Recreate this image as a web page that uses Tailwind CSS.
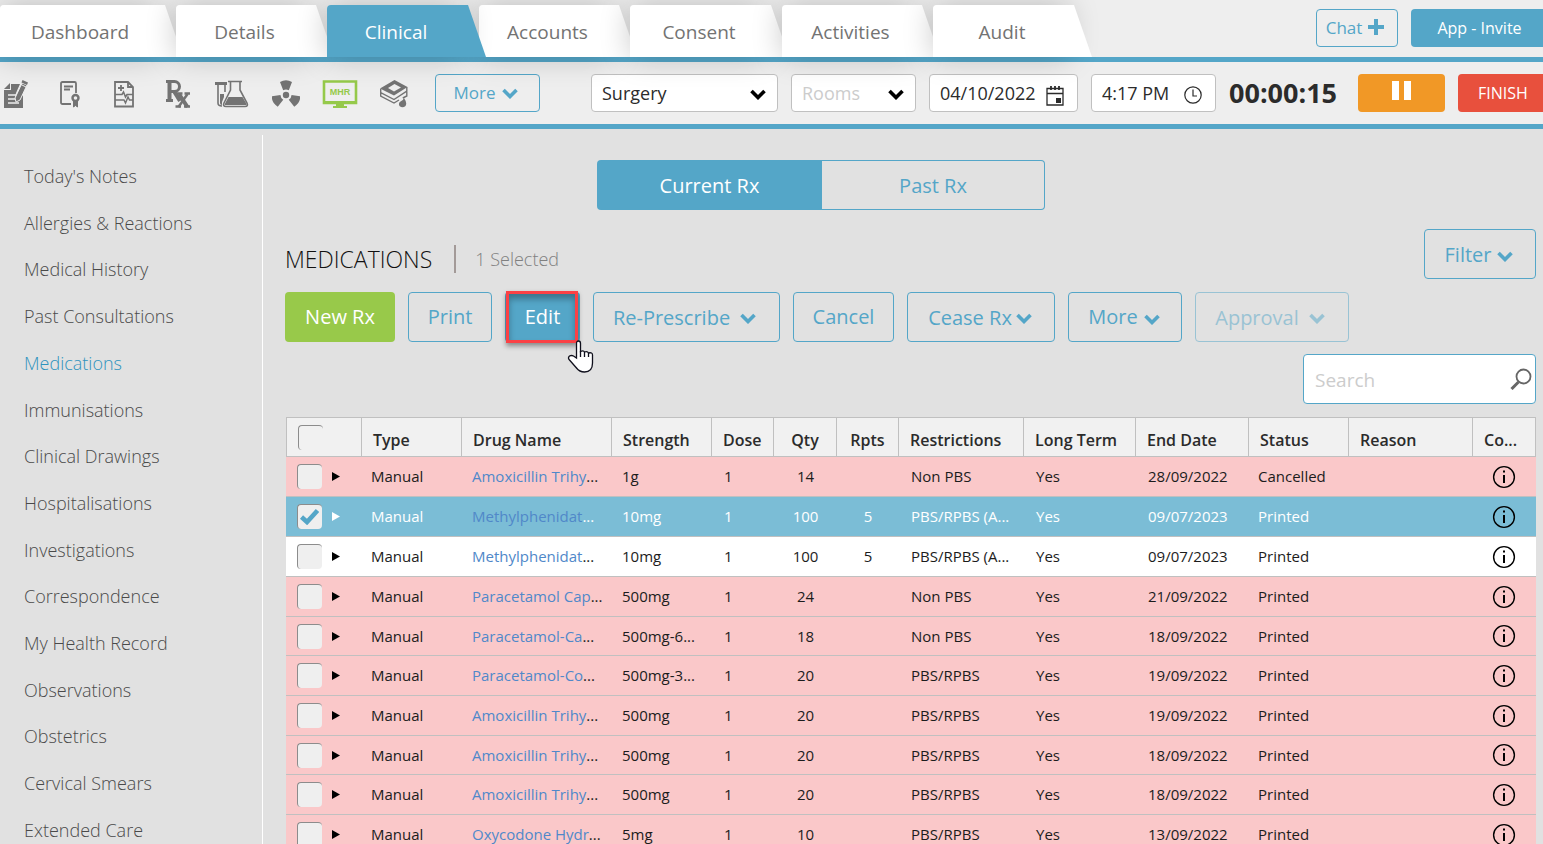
<!DOCTYPE html>
<html lang="en">
<head>
<meta charset="utf-8">
<title>Clinical - Medications</title>
<script src="https://cdn.jsdelivr.net/npm/@tailwindcss/browser@4"></script>
</head>
<body class="h-screen overflow-hidden bg-[#e1e1e1] font-['Open_Sans',sans-serif] text-[#737373]">
<svg class="hidden" aria-hidden="true">
  <symbol id="chev" viewBox="0 0 16 11"><path d="M1.5 2 8 8.5 14.500 2" fill="none" stroke="currentColor" stroke-width="3.600"/></symbol>
  <symbol id="info" viewBox="0 0 24 24"><circle cx="12" cy="12" r="10.400" fill="none" stroke="#000" stroke-width="1.400"/><path d="M11 5.500h2v2h-2zM11 10h2v8h-2z" fill="#000"/></symbol>
</svg>
<div class="flex h-full flex-col">
  <header class="relative z-10 flex shrink-0 items-end justify-between border-b-[5px] border-[#54a6c8] bg-[#eee] pt-[5px]">
    <nav id="tabs" class="flex text-[19px]" aria-label="Patient record"></nav>
    <div class="-mr-[5px] flex gap-[13px] self-start pt-1">
      <button class="flex h-[38px] w-[82px] items-center justify-center gap-[6px] rounded border border-[#54a6c8] pr-1 text-[17px] text-[#54a6c8]">Chat
        <svg class="mb-[2px] size-4" viewBox="0 0 16 16" fill="currentColor"><path d="M6 0h4v6h6v4h-6v6H6v-6H0V6h6z"/></svg></button>
      <button class="h-[38px] w-[137px] rounded bg-[#54a6c8] text-base text-white">App - Invite</button>
    </div>
  </header>
  <div class="flex shrink-0 items-center border-b-[5px] border-[#54a6c8] bg-[#eee] py-3">
    <div class="flex gap-[22px] pt-[2px]">
      <button class="flex w-8 justify-center" aria-label="Notes">
        <svg class="h-7 w-6 shrink-0" viewBox="0 0 24 28" fill="#737373"><path d="M7 4h9l-4 9-1 4 3 1 4-2 1-1v13H0V10h7z"/><path d="M6 3v6H0z"/><path d="M4 15h8M4 19h9M4 23h11" stroke="#eee" stroke-width="1.500"/><path d="m18 3 5 2-7 15-4 2-1-4z" stroke="#eee" stroke-width="1"/><path d="m18.500 0 5.500 2.500-1 2.500-5.500-2.500z"/><path d="m17 4.500 5 2.500" stroke="#eee" stroke-width="1"/></svg></button>
      <button class="flex w-8 justify-center" aria-label="Certificate">
        <svg class="h-7 w-5 shrink-0" viewBox="0 0 20 28" fill="none" stroke="#737373" stroke-width="1.800"><path d="M11 24H2.500Q1 24 1 22.500v-19Q1 2 2.500 2h12Q16 2 16 3.500V13"/><path d="M4 6.500h9M4 9.500h6"/><circle cx="15.500" cy="18" r="3" stroke-width="2.400"/><path d="M13.500 21v6l2-1.500 2 1.500v-6" fill="#737373" stroke-width="1"/></svg></button>
      <button class="flex w-8 justify-center" aria-label="Health summary">
        <svg class="h-7 w-5 shrink-0" viewBox="0 0 20 28" fill="none" stroke="#737373" stroke-width="1.800"><path d="M1 2h13l5 5v19.500H1z"/><path d="M14 2v5h5" /><path d="M4 8h6M7 5v6"/><path d="M1 14.500h7l1.500-2.500 2 5 1.500-2.500h6M1 20h9l1.500 3 2.500-6 1.500 3H19" stroke-width="1.500"/></svg></button>
      <button class="flex w-8 justify-center" aria-label="Prescriptions">
        <svg class="h-7 w-6 shrink-0" viewBox="0 0 24 28" fill="none" stroke="#737373"><path d="M3.500 1v20" stroke-width="4"/><path d="M0 1.500h8.500a4.500 4.500 0 0 1 0 10H4M0 20.500h7" stroke-width="3"/><path d="m8.500 12 5.500 9" stroke-width="4"/><path d="m13 14 8.500 13" stroke-width="4"/><path d="m21.500 14-9 13" stroke-width="2.500"/><path d="M11 13.500h5.500M18.500 13.500H24M9.500 26.500H15M18 26.500h6" stroke-width="2.500"/></svg></button>
      <button class="flex w-8 justify-center" aria-label="Pathology">
        <svg class="h-7 w-[34px] shrink-0" viewBox="0 0 34 28" fill="none" stroke="#737373" stroke-width="1.600"><path d="M0 3.500h12" stroke-width="3"/><path d="M3 4v19q0 3 4 3M10 4v8"/><path d="M5 14h4v3l-2 5v3q-2 0-2-2z" fill="#737373" stroke="none"/><path d="M13 1.500h14M15.500 2v8L9 23q-1.500 3.500 2 3.500h19q3.500 0 2-3.500L25 10V2"/><path d="M13.500 17h14l3.800 6.500q1 1.500-1 1.500H11q-2 0-1-1.500z" fill="#737373" stroke="none"/></svg></button>
      <button class="flex w-8 justify-center" aria-label="Radiology">
        <svg class="h-7 w-7 shrink-0" viewBox="0 0 28 28" fill="#737373"><circle cx="14" cy="15" r="3.200"/><g id="blade"><path d="M8 2q6-3.500 12 0l-3.200 8.200q-2.800-1.400-5.600 0z"/></g><use href="#blade" transform="rotate(120 14 15)"/><use href="#blade" transform="rotate(240 14 15)"/></svg></button>
      <button class="flex w-8 justify-center" aria-label="My Health Record">
        <svg class="h-7 w-9 shrink-0" viewBox="0 0 36 28"><path d="M2 1.500h32v21.500H2z" fill="none" stroke="#95c94a" stroke-width="2.600"/><path d="M1 21h34v3H1zM14 24h8v2h3v2H11v-2h3z" fill="#95c94a"/><text x="18" y="15" text-anchor="middle" font-size="9" font-weight="700" fill="#95c94a" font-family="Liberation Sans">MHR</text></svg></button>
      <button class="flex w-8 justify-center" aria-label="Specimens">
        <svg class="h-7 w-7 shrink-0" viewBox="0 0 28 28"><path fill-rule="evenodd" fill="#737373" d="M14.500 0 27.500 7 14 15.500 0 8.500zM14.500 4 8 8l6 3.500L21 7.500z"/><path d="M.7 9v3.500L14 19.500 26.800 11V7M.7 12.500v3.500L14 23l5-3M26.800 11v5l-4 2" fill="none" stroke="#737373" stroke-width="1.400"/><path d="M24 18q3.500 5 1.500 8-3 2.500-6 0-1.500-3 1-4.500Q23 21 24 18z" fill="#737373"/></svg></button>
    </div>
    <button class="ml-[25px] flex h-[38px] w-[105px] shrink-0 items-center justify-center gap-[6px] rounded border border-[#54a6c8] pr-1 text-[17px] text-[#54a6c8]">More <svg class="h-[11px] w-4"><use href="#chev"/></svg></button>
    <div class="-mr-[5px] ml-auto flex shrink-0 items-center gap-[13px] text-[18px] text-[#2b2b2b]">
      <div class="relative"><select aria-label="Location" class="h-[38px] w-[187px] appearance-none rounded border border-[#c0c0c0] bg-white px-[10px]"><option>Surgery</option></select><svg class="pointer-events-none absolute top-[15px] right-3 h-[11px] w-4 text-black"><use href="#chev"/></svg></div>
      <div class="relative"><select aria-label="Room" class="h-[38px] w-[125px] appearance-none rounded border border-[#c0c0c0] bg-white px-[10px] text-[#ccc]"><option>Rooms</option></select><svg class="pointer-events-none absolute top-[15px] right-3 h-[11px] w-4 text-black"><use href="#chev"/></svg></div>
      <div class="relative"><input aria-label="Date" value="04/10/2022" class="block h-[38px] w-[149px] rounded border border-[#c0c0c0] bg-white px-[10px]"><svg class="absolute top-3 right-[14px] h-5 w-[18px]" viewBox="0 0 18 20" fill="none" stroke="#2b2b2b"><path d="M1 2.500h16v16.500H1zM1 7.500h16" stroke-width="1.300"/><path d="M5 0v4M9 0v4M13 0v4" stroke-width="1.800"/><path d="M10 12h5v5h-5z" fill="#2b2b2b" stroke="none"/></svg></div>
      <div class="relative"><input aria-label="Time" value="4:17 PM" class="block h-[38px] w-[125px] rounded border border-[#c0c0c0] bg-white px-[10px]"><svg class="absolute top-3 right-[14px] size-[18px]" viewBox="0 0 18 18" fill="none" stroke="#2b2b2b" stroke-width="1.200"><circle cx="9" cy="9" r="8.200"/><path d="M9 3.500V10h4"/></svg></div>
      <div class="w-[116px] text-[27px] leading-9 font-bold">00:00:15</div>
      <button aria-label="Pause" class="flex h-[38px] w-[87px] justify-center rounded bg-[#f19826] pt-[7px]"><svg class="h-[19px] w-5" viewBox="0 0 20 19" fill="#fff"><path d="M0 0h7v19H0zM12 0h7v19h-7z"/></svg></button>
      <button class="h-[38px] w-[90px] rounded bg-[#e8503d] text-base text-white">FINISH</button>
    </div>
  </div>
  <div class="flex min-h-0 flex-1">
    <aside class="flex w-[263px] shrink-0 flex-col pt-[6px]">
      <nav id="side" class="flex flex-1 flex-col justify-between border-r border-white pt-[29px] pb-[2px] pl-6 text-[18px] leading-6 font-light text-[#4a4a4a]" aria-label="Clinical sections"></nav>
    </aside>
    <main class="min-w-0 flex-1 overflow-hidden pt-[31px] pr-[7px] pl-[22px] text-[20px]">
      <div class="flex justify-center pr-[179px]">
        <button class="h-[50px] w-[225px] rounded-l bg-[#54a6c8] pt-[2px] text-white">Current Rx</button>
        <button class="h-[50px] w-[223px] rounded-r border border-l-0 border-[#54a6c8] pt-[2px] text-[#54a6c8]">Past Rx</button>
      </div>
      <div class="mt-[19px] flex justify-between">
        <div class="flex items-center pt-[10px] font-light">
          <h1 class="text-[23px] text-[#111]">MEDICATIONS</h1>
          <span class="mr-[19px] ml-[22px] h-7 w-[2px] bg-[#a39a98]"></span>
          <span class="text-[18px] text-[#808080]">1 Selected</span>
        </div>
        <button class="flex h-[50px] w-[112px] items-center justify-center gap-[6px] rounded border border-[#54a6c8] pt-[2px] pr-[2px] text-[#54a6c8]">Filter <svg class="mt-[2px] h-[11px] w-4"><use href="#chev"/></svg></button>
      </div>
      <div class="mt-[13px] flex gap-[13px] text-[#54a6c8]">
        <button class="h-[50px] w-[110px] rounded bg-[#98c94a] text-white">New Rx</button>
        <button class="h-[50px] w-[84px] rounded border border-[#54a6c8]">Print</button>
        <button class="relative h-[50px] w-[75px] rounded bg-[#54a6c8] text-white">Edit
          <span class="absolute -top-px right-[2px] -bottom-px left-px border-[3px] border-[#fb4145] shadow-[inset_0_5px_6px_rgba(0,0,0,0.3),0_3px_5px_rgba(0,0,0,0.4)]"></span>
          <svg class="absolute top-12 left-[62px] h-[33px] w-[27px]" viewBox="0 0 27 33"><path d="M9.500 3.500q0-2.500 2-2.500t2 2.500v8q3-1.500 4 .5 3-1 4 1 4-1 4 2v8q0 9-8 9-5 0-8-4l-7-8q-2-2 0-4 2-1 4 0l3 2z" fill="#fff" stroke="#10101c" stroke-width="1.300"/><path d="M13.500 11v6M17.500 12v5M21.500 13v4" stroke="#10101c" stroke-width="1.300"/></svg></button>
        <button class="flex h-[50px] w-[187px] items-center justify-center gap-[10px] rounded border border-[#54a6c8] pt-[2px] pr-1">Re-Prescribe <svg class="h-[11px] w-4"><use href="#chev"/></svg></button>
        <button class="h-[50px] w-[101px] rounded border border-[#54a6c8]">Cancel</button>
        <button class="flex h-[50px] w-[148px] items-center justify-center gap-1 rounded border border-[#54a6c8] pt-[2px] pr-[2px]">Cease Rx <svg class="h-[11px] w-4"><use href="#chev"/></svg></button>
        <button class="flex h-[50px] w-[114px] items-center justify-center gap-[6px] rounded border border-[#54a6c8] pr-[2px]">More <svg class="mt-1 h-[11px] w-4"><use href="#chev"/></svg></button>
        <button class="flex h-[50px] w-[154px] items-center justify-center gap-[10px] rounded border border-[#54a6c8] pt-[2px] pr-1 opacity-50" disabled>Approval <svg class="h-[11px] w-4"><use href="#chev"/></svg></button>
      </div>
      <div class="relative mt-3 ml-auto w-[233px]">
        <input type="text" aria-label="Search" placeholder="Search" class="block h-[50px] w-full rounded border border-[#54a6c8] bg-white px-[11px] pt-[2px] text-[19px] placeholder:text-[#ccc]">
        <svg class="absolute top-[14px] right-1 h-[22px] w-[22px]" viewBox="0 0 22 22" fill="none" stroke="#666"><circle cx="13.500" cy="8.500" r="7" stroke-width="1.800"/><path d="m8.500 14-7 7" stroke-width="3"/></svg>
      </div>
      <div class="mt-[13px] pl-px">
        <table class="w-full table-fixed border-separate border-spacing-0 text-left text-[15px] text-[#1c1c1c]">
          <colgroup id="cols"></colgroup>
          <thead class="text-base text-[#2b2b2b]"><tr id="head" class="h-10 bg-[#f1f1f1]"></tr></thead>
          <tbody id="rows"></tbody>
        </table>
      </div>
    </main>
  </div>
</div>
<script>
const tabs = ['Dashboard','Details','Clinical','Accounts','Consent','Activities','Audit'];
document.getElementById('tabs').innerHTML = tabs.map((t, i) => {
  const on = t === 'Clinical';
  const size = i === 0 ? 'w-[176px] pr-4' : (i % 2 ? 'w-[151px] pr-[14px]' : 'w-[152px] pr-[14px]');
  return `<a href="#" class="relative flex h-[52px] items-center justify-center pt-[2px] ${size} ${on ? 'z-10 text-white' : ''}">
    <span class="absolute inset-y-0 left-0 right-4 rounded-tl shadow-[0_0_30px_rgba(0,0,0,0.22)]"></span>
    <svg class="absolute inset-y-0 right-[-7px] h-full w-7" viewBox="0 0 28 52" preserveAspectRatio="none"><path d="M0 0h10l18 52H0z" fill="${on ? '#54a6c8' : '#fff'}"/></svg>
    <span class="absolute inset-y-0 left-0 right-5 rounded-tl ${on ? 'bg-[#54a6c8]' : 'bg-white'}"></span>
    <span class="relative">${t}</span></a>`;
}).join('');

const side = ["Today's Notes",'Allergies & Reactions','Medical History','Past Consultations','Medications','Immunisations','Clinical Drawings','Hospitalisations','Investigations','Correspondence','My Health Record','Observations','Obstetrics','Cervical Smears','Extended Care'];
document.getElementById('side').innerHTML = side.map(s => `<a href="#" class="${s === 'Medications' ? 'text-[#2e93be]' : ''}">${s.replace('&', '&amp;')}</a>`).join('');

const widths = [76,100,150,100,62,63,62,125,112,113,100,124,63];
document.getElementById('cols').innerHTML = widths.map(w => `<col style="width:${w}px">`).join('');
const box = (checked, label, cls) => `<span class="relative block"><input type="checkbox" aria-label="${label}" ${checked ? 'checked' : ''} class="block size-[25px] appearance-none rounded border-t border-l border-[#8c8c8c] ${cls}">${checked ? '<svg class="pointer-events-none absolute top-1 left-[3px] h-[17px] w-[19px]" viewBox="0 0 19 17"><path d="M1.500 9l5.500 5L17.500 2.500" fill="none" stroke="#54a6c8" stroke-width="4.600"/></svg>' : ''}</span>`;
const heads = ['Type','Drug Name','Strength','Dose','Qty','Rpts','Restrictions','Long Term','End Date','Status','Reason','Co...'];
document.getElementById('head').innerHTML = `<th class="border-t border-r border-b border-l border-[#c0c0c0] pl-[11px]">${box(false, 'Select all', 'bg-[#f1f1f1]')}</th>` +
  heads.map(h => `<th class="border-t border-r border-b border-[#c0c0c0] pt-[6px] font-semibold whitespace-nowrap ${h === 'Qty' || h === 'Rpts' ? 'text-center' : 'pl-[11px]'}">${h}</th>`).join('');

const data = [
  ['Amoxicillin Trihy','1g','14','','Non PBS','28/09/2022','Cancelled'],
  ['Methylphenidat','10mg','100','5','PBS/RPBS (A...','09/07/2023','Printed'],
  ['Methylphenidat','10mg','100','5','PBS/RPBS (A...','09/07/2023','Printed'],
  ['Paracetamol Cap','500mg','24','','Non PBS','21/09/2022','Printed'],
  ['Paracetamol-Ca','500mg-6...','18','','Non PBS','18/09/2022','Printed'],
  ['Paracetamol-Co','500mg-3...','20','','PBS/RPBS','19/09/2022','Printed'],
  ['Amoxicillin Trihy','500mg','20','','PBS/RPBS','19/09/2022','Printed'],
  ['Amoxicillin Trihy','500mg','20','','PBS/RPBS','18/09/2022','Printed'],
  ['Amoxicillin Trihy','500mg','20','','PBS/RPBS','18/09/2022','Printed'],
  ['Oxycodone Hydr','5mg','10','','PBS/RPBS','13/09/2022','Printed']
];
document.getElementById('rows').innerHTML = data.map((r, i) => {
  const look = i === 1 ? 'bg-[#7bbdd6] text-white' : i === 2 ? 'bg-white' : 'bg-[#fac8c9]';
  const td = (v, c = 'pl-[11px]') => `<td class="border-b border-[#c0c0c0] whitespace-nowrap ${c}">${v}</td>`;
  return `<tr class="${i > 1 && i % 3 === 1 ? 'h-[39px]' : 'h-10'} ${look}">` +
    td(`<div class="flex items-center gap-[10px]">${box(i === 1, 'Select ' + r[0], 'bg-[#efefef]')}<button aria-label="Expand" class="block"><svg class="h-[9px] w-2" viewBox="0 0 8 9" fill="${i === 1 ? '#fff' : '#000'}"><path d="M0 0l8 4.500L0 9z"/></svg></button></div>`) +
    td('Manual', 'pl-[9px]') + td(`<a href="#" class="text-[#5088c9]">${r[0]}</a>...`, 'pl-[10px]') + td(r[1], 'pl-[10px]') + td('1', 'pl-3') +
    td(r[2], 'text-center') + td(r[3], 'text-center') + td(r[4], 'pl-3') + td('Yes', 'pl-3') + td(r[5], 'pl-3') + td(r[6], 'pl-[9px]') + td('') +
    td('<button aria-label="Comment" class="mx-auto block"><svg class="size-6"><use href="#info"/></svg></button>', 'pr-[2px]') + '</tr>';
}).join('');
</script>
</body>
</html>
